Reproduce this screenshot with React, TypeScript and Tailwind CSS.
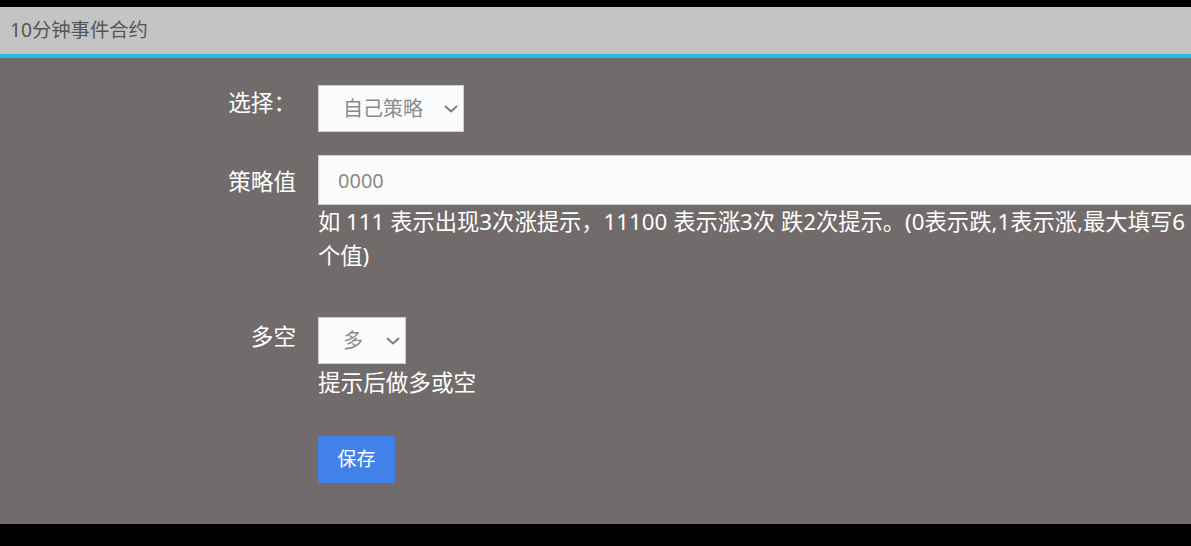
const font = { fontFamily: '"Noto Sans", "Noto Sans CJK SC", sans-serif' };

const Chevron = () => (
  <svg
    className="pointer-events-none absolute right-[6px] top-1/2 -translate-y-1/2"
    width="14"
    height="8"
    viewBox="0 0 14 8"
    fill="none"
    stroke="#777"
    strokeWidth="1.8"
    strokeLinecap="round"
    strokeLinejoin="round"
  >
    <path d="M1.5 1.5 L7 6.5 L12.5 1.5" />
  </svg>
);

const Select = ({ options, width }: { options: string[]; width: string }) => (
  <div className={`relative h-[47px] ${width}`}>
    <select
      className="h-full w-full appearance-none rounded-none border border-[#cfcfcf] bg-[#fbfbfb] pl-[24px] text-[20px] text-[#8a8a8a] outline-none"
      style={font}
      defaultValue={options[0]}
    >
      {options.map((o) => (
        <option key={o}>{o}</option>
      ))}
    </select>
    <Chevron />
  </div>
);

const App = () => {
  return (
    <div className="w-[1191px] h-[546px] overflow-hidden bg-black pt-[7px]" style={font}>
      <div className="h-[47px] bg-[#c4c4c4] border-b-[4px] border-[#26bde2] box-content flex items-center pl-[10px]">
        <span className="text-[19.3px] text-[#555]">10分钟事件合约</span>
      </div>

      <div className="bg-[#716c6b] pt-[27px] pb-[41px] text-white">
        <div className="grid grid-cols-[296px_890px] gap-x-[22px]">
          <div className="text-right text-[22.6px] leading-[36px]">选择：</div>
          <div className="mb-[23px]">
            <Select options={["自己策略", "系统策略"]} width="w-[146px]" />
          </div>

          <div className="text-right text-[22.6px] leading-[36px] pt-[9px]">策略值</div>
          <div>
            <input
              className="h-[50px] w-full border border-[#d0d0d0] bg-[#fbfbfb] pl-[19px] text-[20px] text-[#555] placeholder:text-[#8a8a8a] outline-none"
              style={font}
              placeholder="0000"
            />
            <p className="text-[22.3px] leading-[34px] w-[885px]">
              如 111 表示出现3次涨提示，11100 表示涨3次 跌2次提示。(0表示跌,1表示涨,最大填写6个值)
            </p>
          </div>

          <div className="text-right text-[22.6px] leading-[36px] pt-[2px] mt-[44px]">多空</div>
          <div className="mt-[44px]">
            <Select options={["多", "空"]} width="w-[88px]" />
            <p className="text-[22.6px] leading-[38px]">提示后做多或空</p>
          </div>

          <div />
          <div className="mt-[34px]">
            <button className="h-[47px] w-[77px] rounded-[3px] bg-[#4381ea] text-[19px] text-white">
              保存
            </button>
          </div>
        </div>
      </div>
    </div>
  );
};

export default App;
